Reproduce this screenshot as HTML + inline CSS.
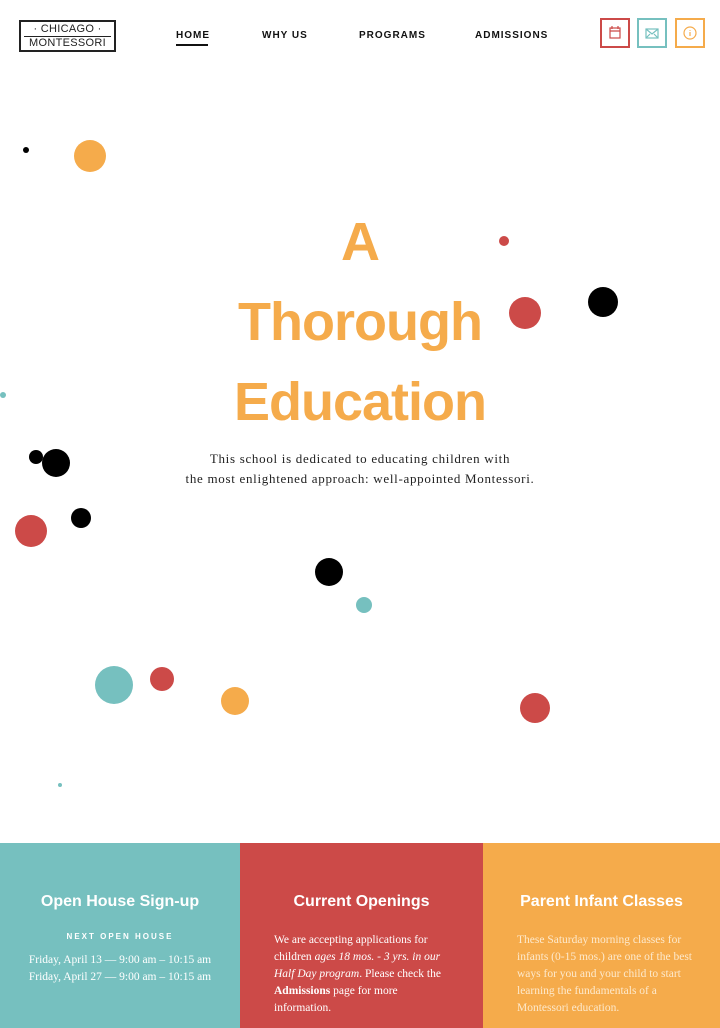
<!DOCTYPE html>
<html><head><meta charset="utf-8"><style>
*{margin:0;padding:0;box-sizing:border-box}
body{width:720px;height:1028px;overflow:hidden;background:#fff;position:relative;font-family:"Liberation Sans",sans-serif}
.logo{position:absolute;left:19px;top:20px;width:97px;height:32px;border:2px solid #222;text-align:center;font-size:11px;line-height:13px;color:#222;letter-spacing:.3px}
.logo .l1{border-bottom:1px solid #222;margin:1px 3px 0}
nav a{position:absolute;top:30px;font-size:10px;font-weight:bold;letter-spacing:1px;color:#111;text-decoration:none}
.ic{position:absolute;top:18px;width:30px;height:30px;border:2px solid}
.c{position:absolute;border-radius:50%}
h1{position:absolute;left:0;width:720px;top:202px;text-align:center;color:#f5ab4b;font-size:54px;line-height:80px;font-weight:bold;letter-spacing:-1px}
.p{position:absolute;top:449px;width:720px;text-align:center;font-family:"Liberation Serif",serif;font-size:13px;line-height:20px;color:#222;letter-spacing:.7px}
.col{position:absolute;top:843px;height:185px;color:#fff;font-family:"Liberation Serif",serif;font-size:11.5px;line-height:17px}
.col h2{font-family:"Liberation Sans",sans-serif;font-size:16px;text-align:center;margin-top:50px;font-weight:bold}
</style></head><body>
<div class="logo"><div class="l1">· CHICAGO ·</div><div>MONTESSORI</div></div>
<nav><a style="left:176px">HOME</a><a style="left:262px">WHY US</a><a style="left:359px">PROGRAMS</a><a style="left:475px">ADMISSIONS</a></nav>
<div style="position:absolute;left:176px;top:44px;width:32px;height:2px;background:#111"></div>
<div class="ic" style="left:600px;border-color:#cc4a48"><svg width="26" height="26" viewBox="0 0 26 26"><rect x="8" y="8" width="10" height="10" fill="none" stroke="#cc4a48" stroke-width="1.2"/><path d="M8 11h10M10 6v3M16 6v3" stroke="#cc4a48" stroke-width="1.2"/></svg></div>
<div class="ic" style="left:637px;border-color:#76c0bf"><svg width="26" height="26" viewBox="0 0 26 26"><rect x="7" y="9" width="12" height="9" fill="none" stroke="#76c0bf" stroke-width="1.2"/><path d="M7 9l6 5 6-5M7 18l4-4M19 18l-4-4" fill="none" stroke="#76c0bf" stroke-width="1.2"/></svg></div>
<div class="ic" style="left:675px;border-color:#f5ab4b"><svg width="26" height="26" viewBox="0 0 26 26"><circle cx="13" cy="13" r="6" fill="none" stroke="#f5ab4b" stroke-width="1.2"/><path d="M13 12v4M13 10v.8" stroke="#f5ab4b" stroke-width="1.2"/></svg></div>
<h1>A<br>Thorough<br>Education</h1>
<div class="p">This school is dedicated to educating children with<br>the most enlightened approach: well-appointed Montessori.</div>
<div class="c" style="left:23px;top:147px;width:6px;height:6px;background:#000"></div>
<div class="c" style="left:74px;top:140px;width:32px;height:32px;background:#f5ab4b"></div>
<div class="c" style="left:499px;top:236px;width:10px;height:10px;background:#cc4a48"></div>
<div class="c" style="left:509px;top:297px;width:32px;height:32px;background:#cc4a48"></div>
<div class="c" style="left:588px;top:287px;width:30px;height:30px;background:#000"></div>
<div class="c" style="left:0;top:392px;width:6px;height:6px;background:#76c0bf"></div>
<div class="c" style="left:29px;top:450px;width:14px;height:14px;background:#000"></div>
<div class="c" style="left:42px;top:449px;width:28px;height:28px;background:#000"></div>
<div class="c" style="left:15px;top:515px;width:32px;height:32px;background:#cc4a48"></div>
<div class="c" style="left:71px;top:508px;width:20px;height:20px;background:#000"></div>
<div class="c" style="left:315px;top:558px;width:28px;height:28px;background:#000"></div>
<div class="c" style="left:356px;top:597px;width:16px;height:16px;background:#76c0bf"></div>
<div class="c" style="left:95px;top:666px;width:38px;height:38px;background:#76c0bf"></div>
<div class="c" style="left:150px;top:667px;width:24px;height:24px;background:#cc4a48"></div>
<div class="c" style="left:221px;top:687px;width:28px;height:28px;background:#f5ab4b"></div>
<div class="c" style="left:520px;top:693px;width:30px;height:30px;background:#cc4a48"></div>
<div class="c" style="left:58px;top:783px;width:4px;height:4px;background:#76c0bf"></div>
<div class="col" style="left:0;width:240px;background:#76c0bf"><h2>Open House Sign-up</h2>
<div style="text-align:center;font-family:'Liberation Sans',sans-serif;font-size:8px;font-weight:bold;letter-spacing:2px;margin-top:18px">NEXT OPEN HOUSE</div>
<div style="text-align:center;margin-top:7px">Friday, April 13 — 9:00 am – 10:15 am<br>Friday, April 27 — 9:00 am – 10:15 am</div></div>
<div class="col" style="left:240px;width:243px;background:#cc4a48"><h2>Current Openings</h2>
<div style="padding:0 30px 0 34px;margin-top:22px">We are accepting applications for children <i>ages 18 mos. - 3 yrs. in our Half Day program</i>. Please check the <b>Admissions</b> page for more information.</div></div>
<div class="col" style="left:483px;width:237px;background:#f5ab4b"><h2>Parent Infant Classes</h2>
<div style="padding:0 28px 0 34px;margin-top:22px;color:#fde9cc">These Saturday morning classes for infants (0-15 mos.) are one of the best ways for you and your child to start learning the fundamentals of a Montessori education.</div></div>
</body></html>
